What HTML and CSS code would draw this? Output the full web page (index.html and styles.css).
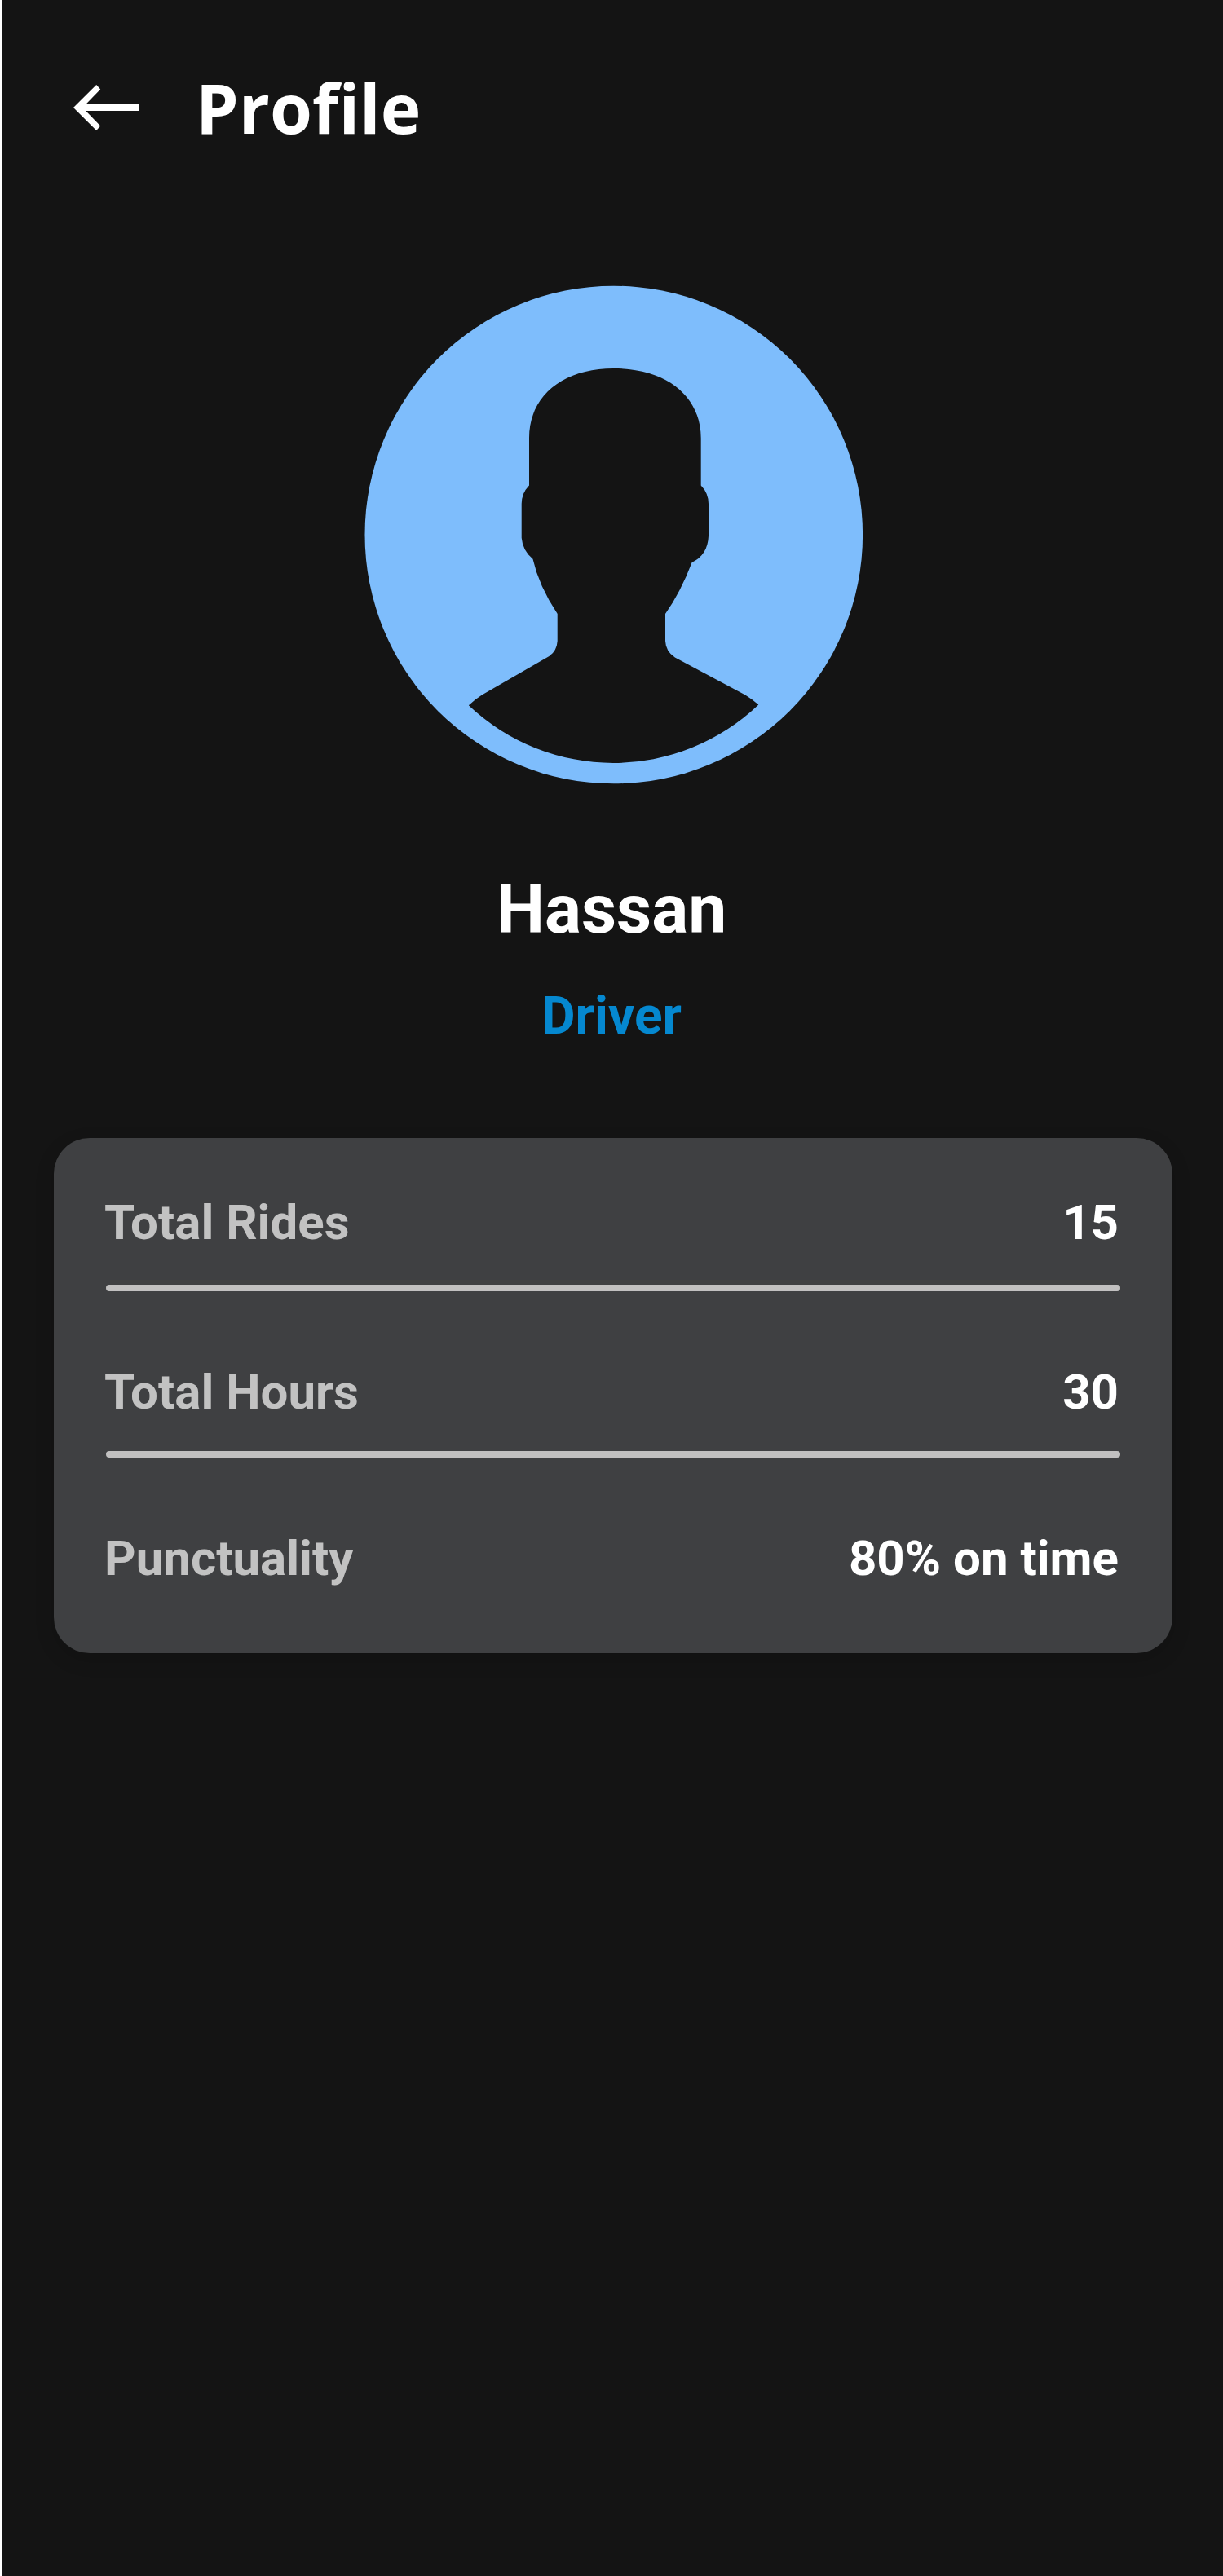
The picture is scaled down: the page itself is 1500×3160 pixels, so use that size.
FILE: index.html
```html
<!DOCTYPE html>
<html lang="en">
<head>
  <meta charset="utf-8">
  <title>Profile</title>
  <link rel="stylesheet" href="styles.css">
</head>
<body>
  <div class="screen">
    <header class="header">
      <svg class="back" viewBox="0 0 80 56" aria-label="Back">
        <path d="M80 24H15.2L33.2 5.4 28.2 0 0 28 28.2 56 33.2 50.6 15.2 32H80z"/>
      </svg>
      <h1 class="title">Profile</h1>
    </header>
    <main class="main">
      <svg class="avatar" viewBox="0 0 612 612" aria-label="Avatar">
        <circle class="avatar-disc" cx="305.8" cy="306" r="305.3"/>
        <path class="avatar-person" d="M305.3 102C245 102 202 134.3 202 187.4V245.4Q192.700 255 192.700 268V309.700Q194 325.500 206.500 335.800Q214 369 236.700 403V436.200Q236 448.500 226.500 455L144.100 502.500Q136 507.500 127.800 515.300A258 258 0 0 0 483.300 514.500Q476 508 467 502.500L380.800 456.500Q369.500 449 369 436.200V403Q388 376 401.600 340Q421 331 422 307.600V268Q422 255 412.700 245.400V187.400C412.700 138 373 102 305.300 102z"/>
      </svg>
      <h2 class="name">Hassan</h2>
      <p class="role">Driver</p>
      <section class="card">
        <div class="row"><span class="label">Total Rides</span><span class="value">15</span></div>
        <div class="divider"></div>
        <div class="row"><span class="label">Total Hours</span><span class="value">30</span></div>
        <div class="divider"></div>
        <div class="row"><span class="label">Punctuality</span><span class="value">80% on time</span></div>
      </section>
    </main>
  </div>
</body>
</html>
```
FILE: styles.css
```css
* {
  box-sizing: border-box;
  margin: 0;
  padding: 0;
}

body {
  background: #fff;
  font-family: Roboto, sans-serif;
  font-weight: 700;
}

.screen {
  height: 3160px;
  margin-left: 2px;
  background: #141414;
  overflow: hidden;
}

.header {
  display: flex;
  align-items: flex-start;
  gap: 70px;
  height: 264px;
  padding: 74px 88px 0;
}

.back {
  width: 80px;
  height: 56px;
  margin-top: 30px;
  fill: #fff;
}

.title {
  font: 700 84px/115px "Open Sans", sans-serif;
  color: #fff;
}

.main {
  display: flex;
  flex-direction: column;
  align-items: center;
  margin-left: -2px;
  padding-top: 86px;
}

.avatar {
  width: 612px;
  height: 612px;
  margin-left: 6px;
}

.avatar-disc {
  fill: #7ebdfc;
}

.avatar-person {
  fill: #141414;
}

.name {
  margin-top: 104px;
  font-size: 84px;
  line-height: 99px;
  color: #fff;
}

.role {
  margin-top: 44px;
  font-size: 64px;
  line-height: 75px;
  color: #0588d0;
}

.card {
  width: 1372px;
  height: 632px;
  margin: 112px 0 0 4px;
  padding: 68px 64px 0;
  border-radius: 44px;
  background: #3f4042;
  box-shadow: 0 8px 24px rgba(0, 0, 0, 0.14);
}

.row {
  display: flex;
  justify-content: space-between;
  padding-right: 2px;
  margin-left: -2px;
  font-size: 60px;
  line-height: 71px;
}

.label {
  color: #c2c2c2;
}

.value {
  color: #fff;
}

.divider {
  height: 8px;
  margin: 41px 0 88px;
  border-radius: 4px;
  background: #c1c0c0;
}

.divider + .row + .divider {
  margin-top: 37px;
}
```
